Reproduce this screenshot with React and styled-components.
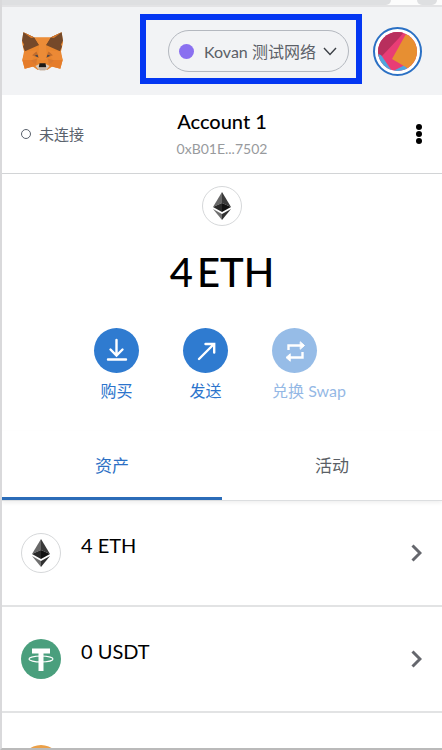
//styled-component imports
import styled, { createGlobalStyle } from 'styled-components'
import { useState } from 'react'

const GlobalStyle = createGlobalStyle`
*, *::before { box-sizing: border-box; }
body {
    margin: 0;
    background: #fff;
    font-family: Lato, "Noto Sans CJK SC", sans-serif;
    color: #000;
}
button {
    font: inherit;
    color: inherit;
    background: none;
    border: 0;
    padding: 0;
    cursor: pointer;
}
svg { display: block; }
`;

const Popup = styled.div`
display: flex;
flex-direction: column;
height: 100vh;
overflow: hidden;
border-left: 2px solid #d9d9db;
border-bottom: 2px solid #bababa;
`;

/* browser strip above the popup */
const BrowserStrip = styled.div`
flex: none;
display: flex;
gap: 26px;
height: 7px;
border-bottom: 2px solid #e3e3e5;
background: #fcfcfc;
`;

const StripItem = styled.span`
flex: ${({ $grow }) => ($grow ? '1' : '0 0 20px')};
margin-right: ${({ $grow }) => ($grow ? '0' : '5px')};
background: #dedfe1;
border-radius: 0 0 10px ${({ $grow }) => ($grow ? '0' : '10px')};
`;

const Header = styled.header`
flex: none;
display: flex;
align-items: center;
gap: 11px;
height: 88px;
padding: 0 20px;
background: #f2f3f5;
`;

const Logo = styled.a`
margin-right: auto;
`;

const Highlight = styled.div`
margin-bottom: 4px;
padding: 10px 7px 6px 22px;
border: 6px solid #0437f2;
`;

const NetworkButton = styled.button`
display: flex;
align-items: center;
height: 42px;
padding: 0 11px 0 10px;
border: 1px solid #b4b8bf;
border-radius: 21px;
font-size: 16px;
color: #5b6067;
white-space: nowrap;
span {
    width: 109px;
    margin: 0 10px;
    text-align: left;
}
`;

const Dot = styled.i`
width: 15px;
height: 15px;
border-radius: 50%;
background: #8a70f0;
`;

const AvatarButton = styled.button`
width: 49px;
height: 49px;
padding: 3px;
border: 2px solid #2b70c4;
border-radius: 50%;
background: #fff;
`;

const AccountBar = styled.section`
flex: none;
display: grid;
grid-template-columns: 1fr auto 1fr;
align-items: center;
height: 79px;
padding: 0 19px;
border-bottom: 1px solid #d2d4d6;
`;

const Status = styled.div`
display: flex;
align-items: center;
gap: 8px;
font-size: 15px;
line-height: 20px;
color: #5a626d;
&::before {
    content: '';
    width: 10px;
    height: 10px;
    border: 1px solid #5a626d;
    border-radius: 50%;
}
`;

const AccountButton = styled.button`
text-align: center;
h1 {
    margin: 0;
    font-size: 20px;
    line-height: 30px;
    font-weight: 500;
}
p {
    margin: 0;
    font-size: 14px;
    line-height: 26px;
    color: #989a9d;
}
`;

const MenuButton = styled.button`
justify-self: end;
`;

const Overview = styled.section`
flex: none;
display: flex;
flex-direction: column;
align-items: center;
padding-top: 12px;
`;

const TokenIcon = styled.span`
display: grid;
place-items: center;
flex: none;
width: 40px;
height: 40px;
border: ${({ $color }) => ($color ? '0' : '1px solid #d6d8da')};
border-radius: 50%;
background: ${({ $color }) => $color || '#fff'};
`;

const Balance = styled.h2`
display: flex;
gap: 4px;
margin: 20px 0 30px;
font-size: 40px;
line-height: 52px;
font-weight: 500;
`;

const Actions = styled.div`
display: flex;
gap: 44px;
padding-right: 4px;
`;

const ActionButton = styled.button`
display: flex;
flex-direction: column;
align-items: ${({ disabled }) => (disabled ? 'flex-start' : 'center')};
gap: 6px;
font-size: 16px;
line-height: 24px;
white-space: nowrap;
color: #2b74cc;
opacity: ${({ disabled }) => (disabled ? 0.5 : 1)};
svg {
    border-radius: 50%;
    background: #2f7bd0;
}
`;

const Tabs = styled.div`
flex: none;
display: flex;
margin-top: 28px;
border-bottom: 1px solid #dcdee0;
box-shadow: 0 2px 4px #f0f0f0;
`;

const Tab = styled.button`
flex: 1;
height: 69px;
border-bottom: 3px solid ${({ $active }) => ($active ? '#2b6cb8' : 'transparent')};
font-size: 17px;
color: ${({ $active }) => ($active ? '#2b6fc4' : '#5a5f66')};
`;

const AssetList = styled.ul`
flex: 1;
min-height: 0;
margin: 0;
padding: 0;
overflow: hidden;
list-style: none;
`;

const AssetRow = styled.button`
display: flex;
align-items: center;
gap: 20px;
width: 100%;
height: 106px;
padding: 0 19px;
border-bottom: 2px solid #e2e3e4;
text-align: left;
svg:last-child {
    margin-right: 1px;
}
`;

const Amount = styled.span`
flex: 1;
padding-bottom: 16px;
font-size: 20px;
line-height: 28px;
`;

const Fox = () => (
    <svg width="41" height="39" viewBox="0 0 122 114" role="img" aria-label="MetaMask">
        <path d="M4 0 37 15H85L118 0 122 30 116 57 121 82 114 108 90 102 75 112H47L32 102 8 108 1 82 6 57 0 30Z" fill="#e8862e" />
        <path d="M4 0 37 15 51 38 9 56 3 42 6 36 0 25Z" fill="#75492a" />
        <path d="M118 0 85 15 71 38 113 56 119 42 116 36 122 25Z" fill="#75492a" />
        <path d="M4 0 37 15 27 17Z M118 0 85 15 95 17Z" fill="#d97a2c" />
        <path d="M37 15H85L71 38 75 80 61 84 47 80 51 38Z" fill="#ec8c37" />
        <path d="M9 56 45 53 31 82H1Z M113 56 77 53 91 82H121Z" fill="#ec8935" />
        <path d="M30 68 43 57 51 76Z M92 68 79 57 71 76Z" fill="#c06c2d" />
        <path d="M38 70 46 67 48 74Z M84 70 76 67 74 74Z" fill="#394252" />
        <path d="M1 82H31L40 100 8 108Z M121 82H91L82 100 114 108Z" fill="#e57c2a" />
        <path d="M27 84 45 78 42 98Z M95 84 77 78 80 98Z" fill="#d9782f" />
        <path d="M40 100 50 95H72L82 100 74 110 68 114H54L48 110Z" fill="#d8cabc" />
        <path d="M52 92H70L72 104H50Z" fill="#1a1916" />
        <path d="M48 107H74L69 112H53Z" fill="#b9aea4" />
    </svg>
)

const Avatar = () => (
    <svg width="39" height="39" viewBox="0 0 39 39" aria-hidden="true">
        <clipPath id="avatar-clip"><circle cx="19.5" cy="19.5" r="19.5" /></clipPath>
        <g clipPath="url(#avatar-clip)">
            <path d="M0 0H39V39H0Z" fill="#e93d75" />
            <path d="M0 0H26L21 6 4 24 0 27Z" fill="#b82f5d" />
            <path d="M0 22 3 23 14 39H0Z M15 39 27 33 31 39Z" fill="#50a5de" />
            <path d="M28 2 40 8V36L31 37 14 27Z" fill="#e78f32" />
        </g>
    </svg>
)

const Ether = ({ size = 28 }) => (
    <svg width={size} height={size} viewBox="0 0 28 28" aria-hidden="true">
        <path d="M14 0V11L5 15Z" fill="#686868" />
        <path d="M14 0V11L23 15Z" fill="#3a3a3a" />
        <path d="M5 15 14 11V20Z" fill="#292929" />
        <path d="M23 15 14 11V20Z" fill="#111" />
        <path d="M5 17 14 22V28Z" fill="#707070" />
        <path d="M23 17 14 22V28Z" fill="#303030" />
    </svg>
)

const Tether = () => (
    <svg width="28" height="28" viewBox="0 0 28 28" fill="none" stroke="#fff" aria-hidden="true">
        <path d="M5 6H23M14 6V26" strokeWidth="5" />
        <ellipse cx="14" cy="14" rx="12" ry="3" strokeWidth="1.1" />
    </svg>
)

const Chevron = () => (
    <svg width="11" height="18" viewBox="0 0 11 18" fill="none" stroke="#65676d" strokeWidth="3" aria-hidden="true">
        <path d="M1.5 1.5 9 9 1.5 16.5" />
    </svg>
)

const actions = [
    {
        label: '购买',
        icon: <path d="M22.5 12V27M16.5 21.5 22.5 27.5 28.5 21.5M14 31.5H32" />,
    },
    {
        label: '发送',
        icon: <path d="M16 31 31 16M22.5 16H31.2V24.5" />,
    },
    {
        label: '兑换 Swap',
        disabled: true,
        icon: (
            <>
                <path d="M16.5 22V17.5H29M30.5 24V29.5H17" strokeLinecap="butt" />
                <path d="M28.5 14 32.5 17.5 28.5 21ZM18 26 14 29.5 18 33Z" fill="#fff" strokeWidth="1" />
            </>
        ),
    },
]

const assets = [
    { id: 'eth', amount: '4 ETH', icon: <Ether /> },
    { id: 'usdt', amount: '0 USDT', icon: <Tether />, color: '#4a9f7d' },
    { id: 'other', amount: '', icon: null, color: '#eba048' },
]

const App = () => {
    const [tab, setTab] = useState('资产')

    return (
        <>
            <GlobalStyle />
            <Popup>
                <BrowserStrip>
                    <StripItem $grow />
                    <StripItem />
                </BrowserStrip>

                <Header>
                    <Logo href="#"><Fox /></Logo>
                    <Highlight>
                        <NetworkButton>
                            <Dot />
                            <span>Kovan 测试网络</span>
                            <svg width="14" height="9" viewBox="0 0 14 9" fill="none" stroke="#3c4046" strokeWidth="1.4" aria-hidden="true">
                                <path d="M1 1 7 7.5 13 1" />
                            </svg>
                        </NetworkButton>
                    </Highlight>
                    <AvatarButton aria-label="Account menu"><Avatar /></AvatarButton>
                </Header>

                <AccountBar>
                    <Status>未连接</Status>
                    <AccountButton>
                        <h1>Account 1</h1>
                        <p>0xB01E...7502</p>
                    </AccountButton>
                    <MenuButton aria-label="Options">
                        <svg width="8" height="20" viewBox="0 0 8 20">
                            <circle cx="4" cy="3" r="3" />
                            <circle cx="4" cy="10" r="3" />
                            <circle cx="4" cy="17" r="3" />
                        </svg>
                    </MenuButton>
                </AccountBar>

                <Overview>
                    <TokenIcon><Ether /></TokenIcon>
                    <Balance>
                        <span>4</span> <span>ETH</span>
                    </Balance>
                    <Actions>
                        {actions.map((action) => (
                            <ActionButton key={action.label} disabled={action.disabled}>
                                <svg width="45" height="45" viewBox="0 0 45 45" fill="none" stroke="#fff" strokeWidth="2.4" strokeLinecap="round" aria-hidden="true">
                                    {action.icon}
                                </svg>
                                {action.label}
                            </ActionButton>
                        ))}
                    </Actions>
                </Overview>

                <Tabs role="tablist">
                    {['资产', '活动'].map((name) => (
                        <Tab key={name} role="tab" aria-selected={tab === name} $active={tab === name} onClick={() => setTab(name)}>
                            {name}
                        </Tab>
                    ))}
                </Tabs>

                <AssetList>
                    {assets.map((asset) => (
                        <li key={asset.id}>
                            <AssetRow aria-label={asset.amount || 'Token'}>
                                <TokenIcon $color={asset.color}>{asset.icon}</TokenIcon>
                                <Amount>{asset.amount}</Amount>
                                <Chevron />
                            </AssetRow>
                        </li>
                    ))}
                </AssetList>
            </Popup>
        </>
    )
}
export default App
